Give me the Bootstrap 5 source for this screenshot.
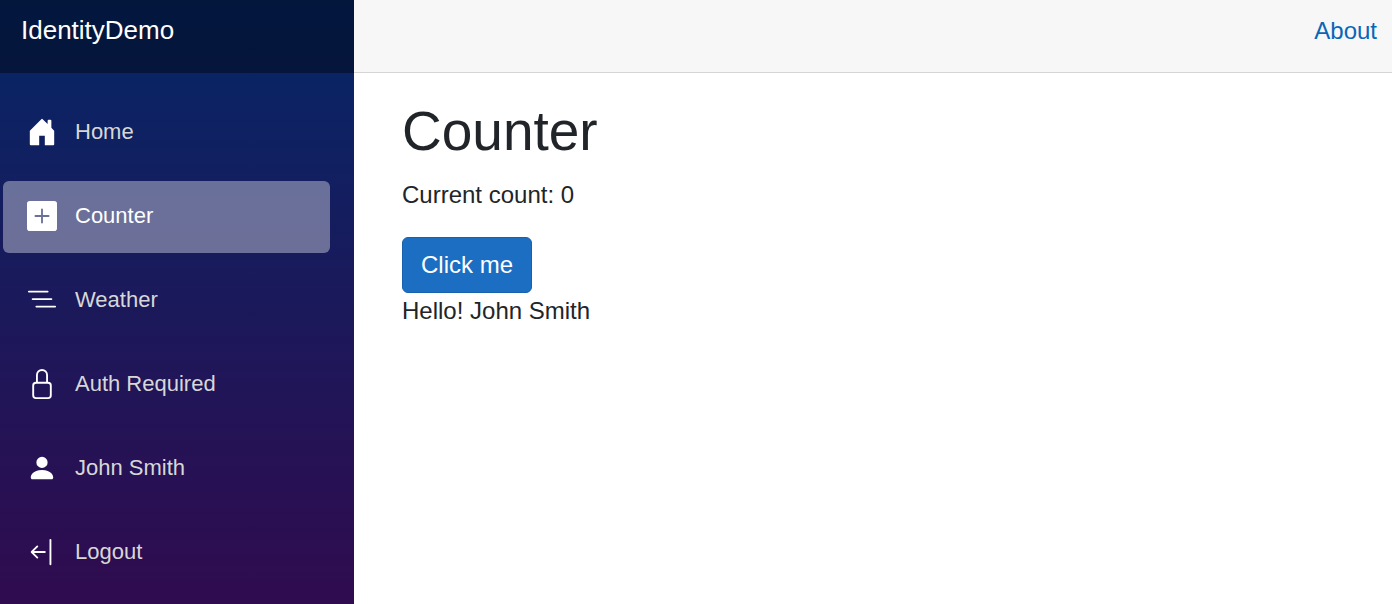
<!DOCTYPE html>
<html lang="en">
<head>
<meta charset="utf-8">
<meta name="viewport" content="width=device-width, initial-scale=1">
<title>Counter</title>
<link href="https://cdn.jsdelivr.net/npm/bootstrap@5.3.0/dist/css/bootstrap.min.css" rel="stylesheet">
<style>
body { font-family: "Liberation Sans", Arial, sans-serif; font-size: 24px; line-height: 36px; color: #212529; }
.sidebar { width: 354px; background-image: linear-gradient(180deg, #052767 0, #300b4f 100%); }
.brand-bar, .top-row { height: 73px; }
.brand-bar { background: rgba(0,0,0,.4); padding: 0 21px 14px; }
.brand-bar a { font-size: 26px; }
.top-row { background: #f7f7f7; border-bottom: 1px solid #d6d5d5; padding: 0 15px 10px; }
.top-row a { color: #0a66b7; }
.side-nav { padding: 24px 24px 0 3px; gap: 12px; }
.side-nav .nav-link { height: 72px; padding: 0 24px 2px; gap: 18px; font-size: 22px; color: #d7d7d7; border-radius: 6px; }
.side-nav .nav-link.active { background: rgba(255,255,255,.37); color: #fff; }
.side-nav svg { width: 30px; height: 30px; fill: #fff; }
.content { padding: 24px 48px; }
.content h1 { font-size: 55px; line-height: 68px; margin-bottom: 12px; }
.content p { margin-bottom: 24px; }
.click-btn { font-size: 24px; line-height: 36px; padding: 9px 18px; border-radius: 6px; background: #1b6ec2; border-color: #1861ac; color: #fff; }
</style>
</head>
<body>
<div class="d-flex min-vh-100">
  <aside class="sidebar flex-shrink-0">
    <div class="brand-bar d-flex align-items-center"><a class="text-white text-decoration-none" href="#">IdentityDemo</a></div>
    <nav class="side-nav nav flex-column">
      <a class="nav-link d-flex align-items-center" href="#"><svg viewBox="0 0 16 16" aria-hidden="true"><path d="M6.500 15v-5h3v5h4.500a.5.5 0 0 0 .5-.5v-7a.5.5 0 0 0-.146-.354L13 5.793V2a.5.5 0 0 0-.5-.5h-1a.5.5 0 0 0-.5.5v1.793L8.354 1.146a.5.5 0 0 0-.708 0l-6 6A.5.5 0 0 0 1.500 7.500v7a.5.5 0 0 0 .5.5z"/></svg>Home</a>
      <a class="nav-link active d-flex align-items-center" aria-current="page" href="#"><svg viewBox="0 0 16 16" aria-hidden="true"><path d="M1.500 0A1.500 1.500 0 0 0 0 1.500v13A1.500 1.500 0 0 0 1.500 16h13a1.500 1.500 0 0 0 1.500-1.500v-13A1.500 1.500 0 0 0 14.500 0h-13zm7 4.500v3h3a.5.5 0 0 1 0 1h-3v3a.5.5 0 0 1-1 0v-3h-3a.5.5 0 0 1 0-1h3v-3a.5.5 0 0 1 1 0z"/></svg>Counter</a>
      <a class="nav-link d-flex align-items-center" href="#"><svg viewBox="0 0 16 16" aria-hidden="true"><path fill-rule="evenodd" d="M4.500 11.500A.5.5 0 0 1 5 11h10a.5.5 0 0 1 0 1H5a.5.5 0 0 1-.5-.5zm-2-4A.5.5 0 0 1 3 7h10a.5.5 0 0 1 0 1H3a.5.5 0 0 1-.5-.5zm-2-4A.5.5 0 0 1 1 3h10a.5.5 0 0 1 0 1H1a.5.5 0 0 1-.5-.5z"/></svg>Weather</a>
      <a class="nav-link d-flex align-items-center" href="#"><svg viewBox="0 0 16 16" aria-hidden="true"><g fill="none" stroke="#fff"><rect x="3.300" y="7.300" width="9.400" height="8.200" rx="1.500"/><path d="M5.300 7.300V3.200a2.700 2.700 0 0 1 5.400 0v4.100"/></g></svg>Auth Required</a>
      <a class="nav-link d-flex align-items-center" href="#"><svg viewBox="0 0 16 16" aria-hidden="true"><path d="M3 14s-1 0-1-1 1-4 6-4 6 3 6 4-1 1-1 1H3Zm5-6a3 3 0 1 0 0-6 3 3 0 0 0 0 6Z"/></svg>John Smith</a>
      <a class="nav-link d-flex align-items-center" href="#"><svg viewBox="0 0 16 16" aria-hidden="true"><path fill-rule="evenodd" d="M12.500 15a.5.5 0 0 1-.5-.5v-13a.5.5 0 0 1 1 0v13a.5.5 0 0 1-.5.5ZM10 8a.5.5 0 0 1-.5.5H3.707l2.147 2.146a.5.5 0 0 1-.708.708l-3-3a.5.5 0 0 1 0-.708l3-3a.5.5 0 1 1 .708.708L3.707 7.500H9.500a.5.5 0 0 1 .5.5Z"/></svg>Logout</a>
    </nav>
  </aside>
  <main class="flex-grow-1">
    <header class="top-row d-flex align-items-center justify-content-end"><a class="text-decoration-none" href="#">About</a></header>
    <article class="content">
      <h1>Counter</h1>
      <p>Current count: 0</p>
      <button type="button" class="btn click-btn">Click me</button>
      <div>Hello! John Smith</div>
    </article>
  </main>
</div>
<script src="https://cdn.jsdelivr.net/npm/bootstrap@5.3.0/dist/js/bootstrap.bundle.min.js"></script>
</body>
</html>
